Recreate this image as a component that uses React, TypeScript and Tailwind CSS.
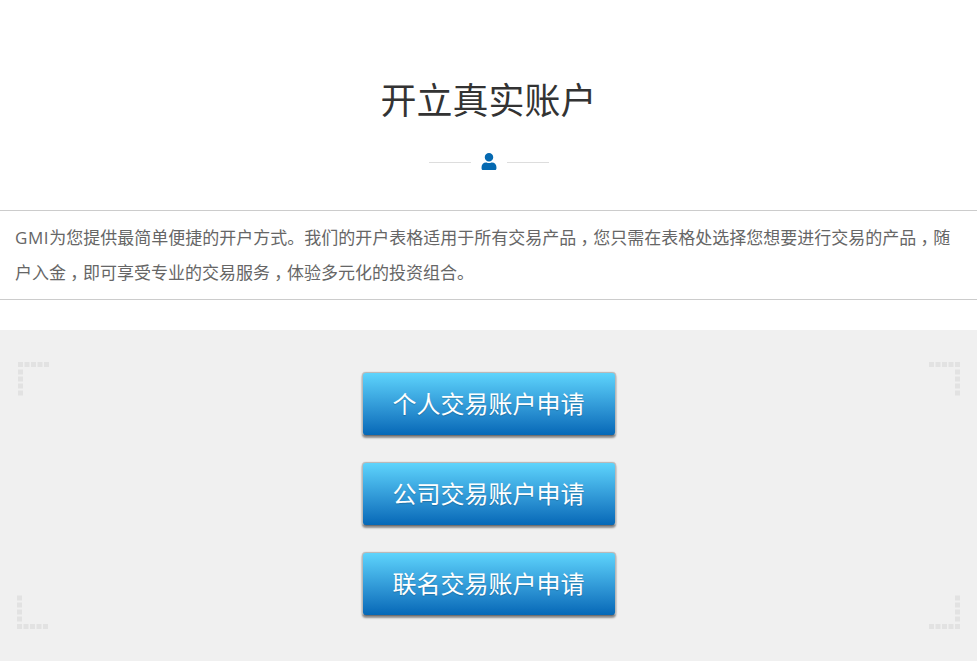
import { FaUser } from 'react-icons/fa';

const buttons = ['个人交易账户申请', '公司交易账户申请', '联名交易账户申请'];

function DotCorner({ className, flipX, flipY }: { className: string; flipX?: boolean; flipY?: boolean }) {
  return (
    <svg width="32" height="36" viewBox="0 0 32 36" className={className}>
      <g fill="#e2e2e2" transform={`translate(${flipX ? 32 : 0} ${flipY ? 36 : 0}) scale(${flipX ? -1 : 1} ${flipY ? -1 : 1})`}>
        {[0, 6.5, 13, 19.5, 26].map((x) => (
          <rect key={x} x={x} y="0" width="5" height="5" />
        ))}
        {[7.5, 14.5, 21.5, 28.5].map((y) => (
          <rect key={y} x="0" y={y} width="5" height="5" />
        ))}
      </g>
    </svg>
  );
}

// the reference sets its full-width commas in the middle of the em box
function Comma() {
  return <span className="px-[4.25px] [font-feature-settings:'halt']">，</span>;
}

export default function App() {
  return (
    <div className="min-h-[661px] bg-white font-['Open_Sans','Noto_Sans_CJK_SC',sans-serif]">
      {/* Heading */}
      <div className="h-[210px] pt-[75px] text-center">
        <h1 className="text-[36px] leading-[52px] text-[#333]">开立真实账户</h1>
        <div className="mt-[26px] flex items-center justify-center gap-[10px]">
          <span className="mt-[2px] h-px w-[42px] bg-[#ddd]" />
          <FaUser className="h-[17px] w-[16px] text-[#0569b1]" />
          <span className="mt-[2px] h-px w-[42px] bg-[#ddd]" />
        </div>
      </div>

      {/* Intro */}
      <p className="h-[90px] border-y border-[#ccc] px-[15px] py-[9px] text-[17px] leading-[35px] text-[#666]">
        <span className="tracking-[0.6px]">GMI</span>为您提供最简单便捷的开户方式。我们的开户表格适用于所有交易产品<Comma />您只需在表格处选择您想要进行交易的产品<Comma />随
        <br />
        户入金<Comma />即可享受专业的交易服务<Comma />体验多元化的投资组合。
      </p>

      {/* Account types */}
      <section className="relative mt-[30px] flex h-[331px] flex-col items-center gap-[26px] bg-[#f0f0f0] pt-[42px]">
        <DotCorner className="absolute left-[18px] top-[32px]" />
        <DotCorner className="absolute right-[17px] top-[32px]" flipX />
        <DotCorner className="absolute bottom-[32px] left-[17px]" flipY />
        <DotCorner className="absolute bottom-[32px] right-[17px]" flipX flipY />
        {buttons.map((label) => (
          <a
            key={label}
            href="#"
            className="flex h-[64px] w-[254px] items-center justify-center rounded-[4px] border border-[#b9b9b9] border-b-[#6f6f6f] bg-gradient-to-b from-[#5ed4fc] to-[#0468b7] text-2xl text-white shadow-[0_2px_2px_rgba(0,0,0,0.4),0_0_1px_rgba(0,0,0,0.35)] [text-shadow:0_1px_1px_rgba(0,0,0,0.2)]"
          >
            {label}
          </a>
        ))}
      </section>
    </div>
  );
}
